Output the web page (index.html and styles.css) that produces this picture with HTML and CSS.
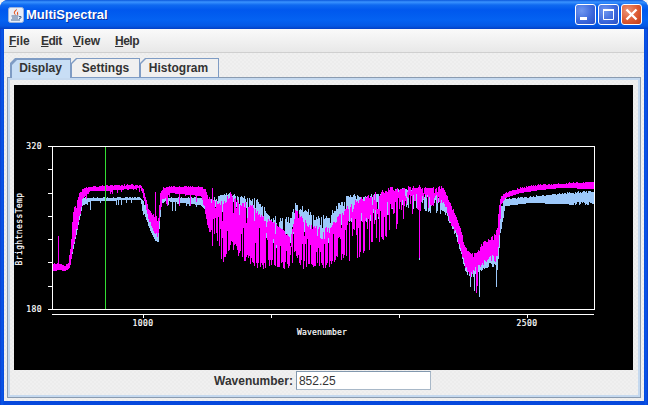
FILE: index.html
```html
<!DOCTYPE html>
<html lang="en">
<head>
    <meta charset="UTF-8">
    <title>MultiSpectral</title>
    <link rel="stylesheet" href="styles.css">
</head>
<body>
    <div class="window">
        <div class="titlebar">
            <svg class="app-icon" width="16" height="16" viewBox="0 0 16 16">
                <rect x="0.5" y="0.5" width="15" height="15" rx="2" fill="#e8eef8" stroke="#9db4dc"/>
                <path d="M8.5 1.5 C10 3.5 6 4.5 7 6.5 C7.5 7.5 8 8 8 8.5 C6 7 5 5.5 6.5 4 C7.5 3 8.5 2.5 8.5 1.5 Z" fill="#e2521d"/>
                <path d="M10.5 4 C9.5 5 8.5 5.5 9 7 C9.2 7.6 9.5 8 9.5 8.5 C10.8 7.5 10 6.5 10 5.5 C10 5 10.2 4.5 10.5 4 Z" fill="#e2521d"/>
                <path d="M3.5 9 H10.5 M4 11 H10 M3 13 H12 M11 9.5 H13 V11 L11 11.5" fill="none" stroke="#4a6a94" stroke-width="1"/>
            </svg>
            <span class="title">MultiSpectral</span>
            <div class="win-buttons">
                <div class="win-btn"><svg width="19" height="19" viewBox="0 0 19 19"><rect x="4" y="12" width="7" height="3" fill="#fff"/></svg></div>
                <div class="win-btn"><svg width="19" height="19" viewBox="0 0 19 19"><path d="M4.5 5.5 H14.5 V14.5 H4.5 Z" fill="none" stroke="#fff"/><rect x="4" y="4" width="11" height="2" fill="#fff"/></svg></div>
                <div class="win-btn close"><svg width="19" height="19" viewBox="0 0 19 19"><path d="M4.5 4.5 L14.5 14.5 M14.5 4.5 L4.5 14.5" stroke="#fff" stroke-width="2.4" fill="none"/></svg></div>
            </div>
        </div>

        <div class="content">
            <div class="menubar">
                <span class="menu"><u>F</u>ile</span>
                <span class="menu tight"><u>E</u>dit</span>
                <span class="menu"><u>V</u>iew</span>
                <span class="menu tight"><u>H</u>elp</span>
            </div>

            <div class="tabs">
                <div class="tab active"><span>Display</span></div>
                <div class="tab"><span>Settings</span></div>
                <div class="tab last"><span>Histogram</span></div>
            </div>

            <div class="panel">
                <svg class="plot" width="619" height="285" viewBox="14 85 619 285">
                    <path id="blueSeries" class="series blue"/>
                    <path id="magentaSeries" class="series magenta"/>
                    <path class="axis" d="M52.5 146.5 H594.5 V309.5 H52.5 Z"/>
                    <path class="axis" d="M48 146.5 H52 M48 169.5 H52 M48 193.5 H52 M48 216.5 H52 M48 239.5 H52 M48 262.5 H52 M48 286.5 H52 M48 309.5 H52"/>
                    <path class="axis" d="M52 314.5 H594 M143.5 314 V318 M271.5 314 V318 M399.5 314 V318 M527.5 314 V318"/>
                    <path class="cursor" d="M105.5 147 V309"/>
                    <text class="tick" x="42" y="149" text-anchor="end">320</text>
                    <text class="tick" x="42" y="312" text-anchor="end">180</text>
                    <text class="tick" x="143" y="326" text-anchor="middle">1000</text>
                    <text class="tick" x="527" y="326" text-anchor="middle">2500</text>
                    <text class="tick wide" x="322" y="335" text-anchor="middle">Wavenumber</text>
                    <text class="tick long" x="0" y="0" text-anchor="middle" transform="translate(22 229) rotate(-90)">BrightnessTemp</text>
                </svg>
                <div class="readout">
                    <label class="readout-label" for="wavenumber">Wavenumber:</label>
                    <input class="readout-input" id="wavenumber" type="text" value="852.25">
                </div>
            </div>
        </div>
    </div>

    <script src="script.js"></script>
</body>
</html>
```

FILE: styles.css
```css
html, body {
    margin: 0;
    height: 100%;
    background-color: #f4f4f4;
    overflow: hidden;
}

body {
    font-family: "Liberation Sans", Arial, sans-serif;
    font-size: 12px;
    color: #333333;
}

.window {
    display: flex;
    flex-direction: column;
    width: 648px;
    height: 405px;
    box-sizing: border-box;
    border-radius: 8px 8px 0 0;
    background: linear-gradient(90deg, #0a3fd0 0, #0858e8 2px, #0648dc 4px, #0648dc 644px, #0856ea 646px, #0a3ccc 648px);
}

/* Title bar */
.titlebar {
    display: flex;
    align-items: center;
    height: 29px;
    flex-shrink: 0;
    padding: 0 6px 0 8px;
    box-sizing: border-box;
    border-radius: 8px 8px 0 0;
    background: linear-gradient(180deg, #0a58dc 0, #3a93ff 2px, #0f6af0 5px, #0058ee 10px, #0462f2 20px, #0558e4 26px, #0340c4 29px);
}

.app-icon {
    flex-shrink: 0;
}

.title {
    margin-left: 2px;
    color: #ffffff;
    font-size: 13px;
    font-weight: bold;
    text-shadow: 1px 1px 0 #0b2f9c;
}

.win-buttons {
    display: flex;
    gap: 2px;
    margin-left: auto;
}

.win-btn {
    width: 19px;
    height: 19px;
    border: 1px solid #ffffff;
    border-radius: 3px;
    background: radial-gradient(circle at 30% 30%, #6f97f0, #3a66da 60%, #2a4fc4);
}

.win-btn svg {
    display: block;
}

.win-btn.close {
    background: radial-gradient(circle at 30% 30%, #ec9478, #dc5a32 55%, #c23c18);
}

/* Content area */
.content {
    display: flex;
    flex-direction: column;
    flex: 1;
    min-height: 0;
    margin: 0 4px 4px 4px;
    background-color: #eeeeee;
    background-image: repeating-conic-gradient(#f0f0f0 0 25%, #ececec 0 50%);
    background-size: 4px 4px;
}

.menubar {
    display: grid;
    grid-template-columns: 32px 32px 42px auto;
    align-items: center;
    height: 24px;
    flex-shrink: 0;
    padding-left: 5px;
    box-sizing: border-box;
    border-bottom: 1px solid #cfcfcf;
    background: linear-gradient(180deg, #fafafa, #e8e8e8);
}

.menu {
    font-weight: bold;
}

.menu.tight {
    letter-spacing: -0.5px;
}

/* Tabs */
.tabs {
    display: flex;
    height: 19px;
    margin-top: 5px;
    padding-left: 6px;
    position: relative;
    z-index: 1;
}

.tab {
    position: relative;
    display: flex;
    align-items: center;
    justify-content: center;
    width: 69px;
    height: 20px;
    box-sizing: border-box;
    font-weight: bold;
    background-color: #7f9cc4;
    clip-path: polygon(5px 0, 100% 0, 100% 100%, 0 100%, 0 5px);
}

.tab::before {
    content: "";
    position: absolute;
    top: 1px;
    left: 1px;
    right: 1px;
    bottom: 1px;
    background-color: #f0f0f0;
    clip-path: polygon(5px 0, 100% 0, 100% 100%, 0 100%, 0 5px);
}

.tab span {
    position: relative;
}

.tab.last {
    width: 79px;
    padding-right: 2px;
}

.tab.active {
    width: 61px;
    z-index: 2;
}

.tab.active::before {
    top: 2px;
    left: 2px;
    bottom: 0;
    background-color: #c8def5;
}

/* Tab body */
.panel {
    display: flex;
    flex-direction: column;
    height: 321px;
    margin: 0 3px;
    padding: 7px 7px 0 6px;
    box-sizing: border-box;
    border: 1px solid #8a9bb0;
    outline: 2px solid #c5d9ef;
    outline-offset: -3px;
}

.plot {
    display: block;
    flex-shrink: 0;
    background-color: #000000;
}

.series {
    fill: none;
    stroke-width: 1;
    shape-rendering: crispEdges;
}

.blue {
    stroke: #9cc8fa;
}

.magenta {
    stroke: #ff00ff;
}

.axis {
    fill: none;
    stroke: #ffffff;
    stroke-width: 1;
    shape-rendering: crispEdges;
}

.cursor {
    fill: none;
    stroke: #33dd33;
    stroke-width: 1;
    shape-rendering: crispEdges;
}

.tick {
    fill: #ffffff;
    stroke: #ffffff;
    stroke-width: 0.2;
    font-family: "DejaVu Sans Mono", monospace;
    font-size: 8px;
    letter-spacing: 0.4px;
}

.wide {
    letter-spacing: 0.2px;
}

.long {
    letter-spacing: 0.4px;
}

.readout {
    display: flex;
    align-items: center;
    gap: 3px;
    height: 19px;
    margin-top: 1px;
    padding-left: 200px;
}

.readout-label {
    font-weight: bold;
}

.readout-input {
    width: 135px;
    height: 19px;
    padding: 0 2px;
    box-sizing: border-box;
    border: 1px solid #8298ae;
    border-right-color: #a8b8c8;
    border-bottom-color: #a8b8c8;
    border-radius: 0;
    background-color: #ffffff;
    color: #333333;
    font-family: "Liberation Sans", Arial, sans-serif;
    font-size: 12px;
}
```

FILE: script.js
```js
// Rough envelopes of the two spectra, read off as [x, top, bottom] in page pixels
const magentaEnv = [
    [52, 263, 270], [60, 263, 269], [64, 265, 270], [68, 262, 268], [70, 247, 265],
    [73, 210, 245], [78, 195, 230], [82, 188, 198], [90, 186, 190], [105, 185, 190],
    [130, 184, 188], [140, 185, 187], [143, 188, 195], [148, 208, 218], [153, 213, 233],
    [158, 217, 237], [160, 192, 213], [162, 187, 200], [170, 186, 192], [200, 186, 195],
    [205, 188, 213], [208, 196, 233], [215, 200, 233], [222, 200, 267], [230, 192, 247],
    [240, 200, 257], [250, 203, 267], [260, 213, 268], [270, 220, 267], [280, 225, 268],
    [290, 237, 268], [295, 210, 255], [300, 213, 268], [310, 225, 268], [320, 225, 270],
    [330, 225, 267], [340, 213, 260], [350, 203, 260], [360, 197, 257], [370, 193, 250],
    [380, 190, 243], [390, 187, 235], [400, 187, 225], [410, 185, 215], [420, 187, 210],
    [430, 187, 207], [440, 185, 203], [445, 190, 207], [450, 203, 225], [455, 213, 232],
    [460, 227, 250], [465, 247, 267], [470, 252, 277], [476, 253, 270], [482, 242, 265],
    [490, 238, 260], [497, 227, 263], [499, 200, 240], [501, 195, 203], [505, 192, 197],
    [520, 187, 192], [540, 184, 189], [560, 183, 187], [594, 181, 188]
];

const blueEnv = [
    [70, 250, 262], [82, 197, 205], [90, 197, 200], [140, 197, 199], [145, 202, 217],
    [150, 220, 230], [155, 232, 240], [158, 230, 241], [161, 198, 203], [165, 197, 200],
    [200, 197, 204], [210, 198, 215], [225, 193, 215], [235, 193, 225], [245, 195, 240],
    [255, 197, 245], [262, 203, 250], [270, 217, 255], [280, 215, 268], [290, 218, 268],
    [295, 202, 255], [300, 205, 265], [310, 210, 270], [320, 215, 270], [330, 213, 265],
    [340, 200, 255], [350, 193, 250], [360, 195, 240], [375, 193, 225], [400, 188, 205],
    [430, 190, 212], [445, 195, 215], [455, 222, 235], [465, 250, 270], [470, 255, 280],
    [476, 258, 275], [490, 250, 265], [497, 240, 270], [500, 205, 240], [505, 198, 205],
    [530, 196, 202], [560, 193, 203], [594, 190, 205]
];

// One-pixel spikes: [x, from, to]
const magentaSpikes = [
    [58, 236, 264], [155, 192, 233], [179, 186, 206], [190, 186, 206], [212, 188, 246],
    [419, 185, 258], [476, 253, 293], [477, 255, 286]
];
const blueSpikes = [
    [90, 198, 210], [419, 250, 260], [470, 260, 287], [474, 262, 291], [479, 262, 297], [496, 260, 287]
];

// small seeded generator so the picture is the same every time
let seed = 7;
function rnd() {
    seed = (seed * 16807) % 2147483647;
    return seed / 2147483647;
}

function lookup(env, x) {
    for (let i = 1; i < env.length; i++) {
        if (x <= env[i][0]) {
            const a = env[i - 1], b = env[i];
            const t = (x - a[0]) / (b[0] - a[0]);
            return [a[1] + (b[1] - a[1]) * t, a[2] + (b[2] - a[2]) * t];
        }
    }
    return null;
}

// depth limits how far a column may hang below its top in the absorption region
function buildPath(env, spikes, depth) {
    let d = '';
    for (let x = env[0][0]; x <= 594; x++) {
        const range = lookup(env, x);
        if (!range) continue;
        const height = range[1] - range[0];
        let top = range[0] + rnd() * 1.5;
        let bottom = range[1];
        if (x >= 208 && x < 440) {
            // absorption lines: towards the right the spikes get sparser and the mass thinner
            const shortChance = x < 340 ? 0.22 : 0.62;
            const r = rnd();
            top = range[0] + (r < 0.25 ? 0.08 + rnd() * 0.3 : rnd() * 0.1) * height;
            const part = rnd() < shortChance ? 0.25 + rnd() * 0.35 : 0.82 + rnd() * 0.18;
            bottom = Math.min(range[0] + part * height, top + depth);
            if (bottom < top + 4) bottom = top + 4;
        } else if (height > 12) {
            top = range[0] + rnd() * rnd() * height * 0.3;
            bottom = top + (range[1] - top) * (0.7 + rnd() * 0.3);
        } else if (x > 160 && x < 210 && rnd() < 0.14) {
            bottom += rnd() * 12;
        } else if (x < 145 && x > 82 && rnd() < 0.18) {
            bottom += rnd() * 5;
        }
        d += 'M' + (x + 0.5) + ' ' + Math.round(top) + 'V' + Math.round(bottom + 1);
    }
    spikes.forEach(function (s) {
        d += 'M' + (s[0] + 0.5) + ' ' + s[1] + 'V' + s[2];
    });
    return d;
}

document.getElementById('blueSeries').setAttribute('d', buildPath(blueEnv, blueSpikes, 24));
document.getElementById('magentaSeries').setAttribute('d', buildPath(magentaEnv, magentaSpikes, 100));
```
